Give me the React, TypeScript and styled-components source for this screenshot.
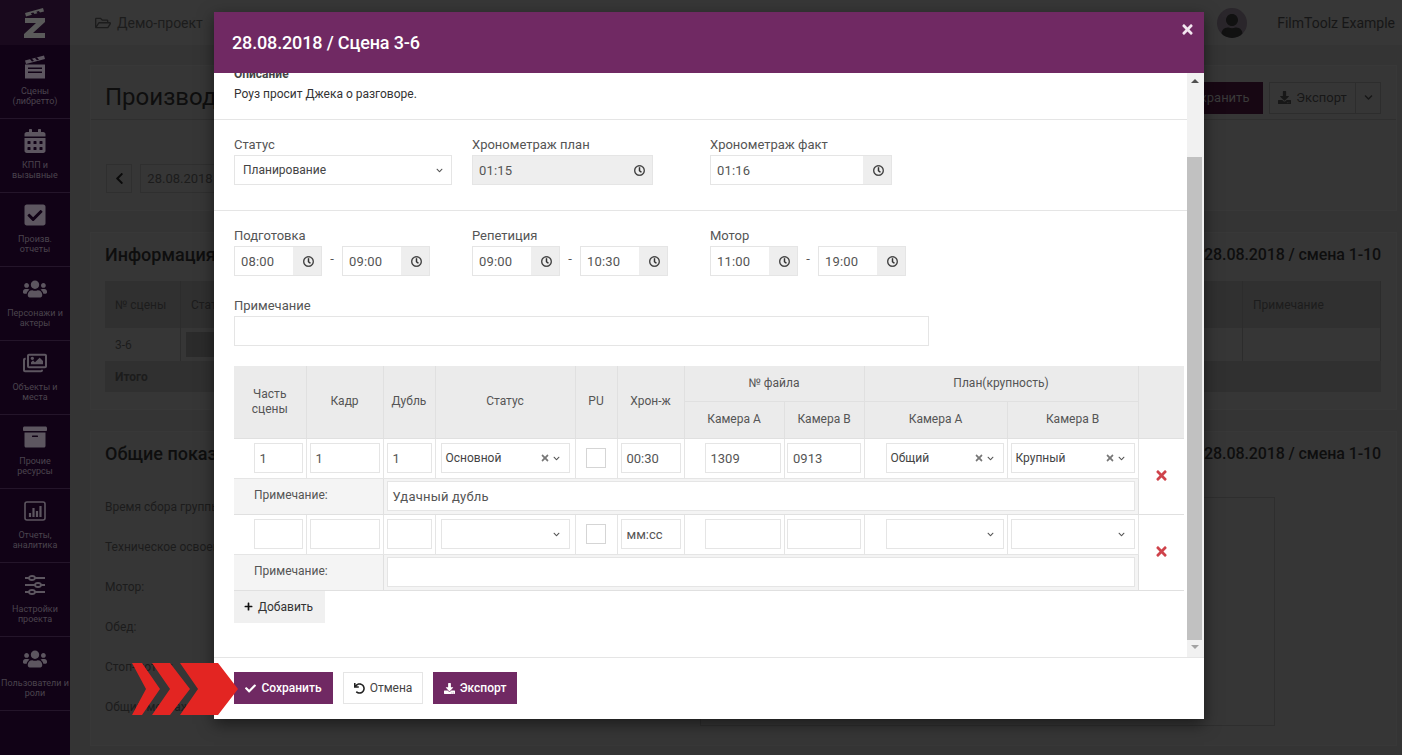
import React from "react";
import styled, { createGlobalStyle } from "styled-components";
import {
  FaArchive,
  FaCalendarAlt,
  FaCheck,
  FaCheckSquare,
  FaChevronDown,
  FaChevronLeft,
  FaDownload,
  FaPlus,
  FaRegClock,
  FaRegFolderOpen,
  FaRegImages,
  FaTimes,
  FaUndo,
  FaUser,
  FaUsers,
} from "react-icons/fa";

const GlobalStyle = createGlobalStyle`
  html, body {
    margin: 0;
    padding: 0;
    background: #343434;
    overflow: hidden;
  }
  * { box-sizing: border-box; }
  body, input, button, table {
    font-family: Roboto, "Liberation Sans", sans-serif;
  }
`;

const Page = styled.div`
  position: relative;
  display: flex;
  width: 1402px;
  height: 755px;
  overflow: hidden;
  background: #343434;
`;

/* ---------- dimmed page behind the modal ---------- */

const Sidebar = styled.nav`
  width: 70px;
  flex: none;
  background: #110216;
`;

const LogoCell = styled.div`
  height: 45px;
  display: flex;
  justify-content: center;
  align-items: center;
  background: #19091d;
`;

const SideItem = styled.div`
  height: 74px;
  border-bottom: 1px solid #24152a;
  display: flex;
  flex-direction: column;
  align-items: center;
  padding-top: 10px;
  color: #5d5660;
  font-size: 24px;
  svg { display: block; height: 24px; }
`;

const SideText = styled.div`
  margin-top: 7px;
  font-size: 9px;
  line-height: 10px;
  text-align: center;
  white-space: pre;
  color: #4b444e;
`;

const Main = styled.main`
  flex: 1;
  min-width: 0;
`;

const TopBar = styled.header`
  height: 45px;
  background: #373737;
  display: flex;
  align-items: center;
  padding: 0 7px 0 25px;
  color: #1c1c1c;
  font-size: 14px;
`;

const ProjectName = styled.div`
  display: flex;
  align-items: center;
  gap: 6px;
  svg { font-size: 16px; }
`;

const Avatar = styled.div`
  margin-left: auto;
  width: 30px;
  height: 30px;
  border-radius: 50%;
  background: #2a262b;
  color: #111;
  display: flex;
  justify-content: center;
  align-items: flex-end;
  overflow: hidden;
  font-size: 24px;
`;

const UserName = styled.div`
  margin-left: 30px;
  color: #161616;
  font-size: 14px;
`;

const Content = styled.div`
  padding: 20px 5px 0 20px;
  display: flex;
  flex-direction: column;
  gap: 21px;
`;

const Card = styled.section<{ $h: number }>`
  height: ${(p) => p.$h}px;
  background: #363636;
  border: 1px solid #383838;
  padding: 0 15px 0 14px;
`;

const PageTitleRow = styled.div`
  height: 54px;
  margin: 0 -15px 0 -14px;
  padding: 10px 15px 0 14px;
  border-bottom: 1px solid #2f2f2f;
  display: flex;
  align-items: center;
  justify-content: flex-end;
`;

const PageTitle = styled.h1`
  margin: 0 auto 2px 0;
  font-size: 24px;
  font-weight: 400;
  color: #0e0e0e;
`;

const DarkButton = styled.div<{ $w: number; $fill?: boolean }>`
  width: ${(p) => p.$w}px;
  height: 32px;
  display: flex;
  align-items: center;
  justify-content: center;
  gap: 5px;
  font-size: 13px;
  color: ${(p) => (p.$fill ? "#3a3a3a" : "#171717")};
  background: ${(p) => (p.$fill ? "#170713" : "transparent")};
  border: 1px solid ${(p) => (p.$fill ? "#170713" : "#2d2d2d")};
  margin-right: ${(p) => (p.$fill ? 6 : 0)}px;
`;

const ChevronButton = styled(DarkButton)`
  border-left: 0;
  font-size: 9px;
`;

const DateRow = styled.div`
  display: flex;
  align-items: center;
  margin-top: 44px;
  gap: 8px;
  margin-left: 1px;
`;

const DateBox = styled.div<{ $w: number }>`
  width: ${(p) => p.$w}px;
  height: 29px;
  border: 1px solid #2f2f2f;
  color: #1c1c1c;
  font-size: 13px;
  display: flex;
  align-items: center;
  justify-content: center;
  svg { color: #0a0a0a; }
`;

const SectionHead = styled.div`
  height: 48px;
  padding-bottom: 5px;
  display: flex;
  align-items: center;
  justify-content: space-between;
`;

const SectionTitle = styled.h2`
  margin: 0;
  font-size: 18px;
  font-weight: 500;
  color: #0e0e0e;
`;

const SectionDate = styled.div`
  font-size: 16px;
  font-weight: 500;
  letter-spacing: -0.1px;
  color: #0e0e0e;
`;

const BgHeadRow = styled.div`
  height: 47px;
  background: #303030;
  display: flex;
  align-items: center;
  font-size: 12px;
  color: #1c1c1c;
`;

const BgRow = styled.div`
  height: 33px;
  display: flex;
  align-items: center;
  font-size: 12px;
  color: #1c1c1c;
`;

const BgTotal = styled(BgRow)`
  height: 31px;
  background: #303030;
  font-weight: 700;
  padding-left: 10px;
`;

const BgCell = styled.div<{ $w: number }>`
  width: ${(p) => p.$w}px;
  height: 100%;
  padding-left: 10px;
  border-right: 1px solid #2c2c2c;
  display: flex;
  align-items: center;
`;

const BgFill = styled(BgCell)`
  flex: 1;
  padding-left: 5px;
`;

const BgBadge = styled.div`
  width: 100px;
  height: 25px;
  background: #2b2b2b;
`;

const BgHeadText = styled.div`
  padding-left: 5px;
`;

const StatsRow = styled.div`
  display: flex;
  justify-content: space-between;
  padding: 19px 106px 0 0;
`;

const StatsList = styled.div`
  display: flex;
  flex-direction: column;
  gap: 24px;
  font-size: 12px;
  line-height: 16px;
  color: #1c1c1c;
`;

const StatsBox = styled.div`
  width: 575px;
  height: 229px;
  margin-top: -2px;
  border: 1px solid #2e2e2e;
`;

/* ---------- modal ---------- */

const Modal = styled.div`
  position: absolute;
  left: 214px;
  top: 12px;
  width: 990px;
  height: 707px;
  display: flex;
  flex-direction: column;
  background: #fff;
  box-shadow: 0 5px 15px rgba(0, 0, 0, 0.5);
`;

const ModalHeader = styled.div`
  height: 61px;
  flex: none;
  padding: 0 18px;
  background: #702963;
  color: #fff;
  display: flex;
  justify-content: space-between;
  align-items: center;
`;

const ModalTitle = styled.h4`
  margin: 0;
  font-size: 18px;
  font-weight: 500;
  letter-spacing: -0.15px;
`;

const CloseIcon = styled(FaTimes)`
  font-size: 15px;
  margin: -26px -9px 0 0;
  color: #f3e6f0;
`;

const ModalMiddle = styled.div`
  flex: 1;
  min-height: 0;
  display: flex;
`;

const ScrollArea = styled.div`
  flex: 1;
  min-width: 0;
  overflow: hidden;
`;

const Scrollbar = styled.div`
  width: 17px;
  flex: none;
  background: #f1f1f1;
  display: flex;
  flex-direction: column;
  align-items: flex-start;
`;

const ScrollArrow = styled.div<{ $up?: boolean }>`
  width: 0;
  height: 0;
  margin: ${(p) => (p.$up ? "6px 0 0 4px" : "5px 0 0 4px")};
  border-left: 4px solid transparent;
  border-right: 4px solid transparent;
  border-bottom: ${(p) => (p.$up ? "4px solid #505050" : "0")};
  border-top: ${(p) => (p.$up ? "0" : "4px solid #a3a3a3")};
`;

const ScrollThumb = styled.div`
  width: 15px;
  height: 483px;
  margin-top: 74px;
  background: #c1c1c1;
`;

const FormBlock = styled.div`
  padding: 0 20px;
  border-bottom: 1px solid #e5e5e5;
`;

const DescBlock = styled(FormBlock)`
  height: 47px;
  padding-top: 14px;
  font-size: 12px;
  line-height: 14px;
  color: #333;
  position: relative;
`;

const DescLabel = styled.div`
  position: absolute;
  top: -6px;
  left: 20px;
  font-weight: 700;
  color: #444;
`;

const FieldRow = styled.div`
  display: flex;
  gap: 20px;
`;

const StatusBlock = styled(FormBlock)`
  height: 91px;
  padding-top: 18px;
`;

const TimesBlock = styled.div`
  padding: 18px 20px 0;
`;

const Field = styled.div`
  width: 218px;
`;

const FieldLabel = styled.div`
  font-size: 13px;
  line-height: 13px;
  height: 17px;
  color: #555;
`;

const InputGroup = styled.div<{ $w: number; $off?: boolean }>`
  width: ${(p) => p.$w}px;
  height: 30px;
  border: 1px solid #e5e5e5;
  background: ${(p) => (p.$off ? "#eeeeee" : "#fff")};
  display: flex;
  align-items: center;
  font-size: 13px;
  color: #555;
`;

const GroupValue = styled.div`
  flex: 1;
  padding-left: 6px;
  letter-spacing: 0.2px;
`;

const ClockAddon = styled.div`
  width: 28px;
  height: 100%;
  background: #eeeeee;
  color: #333;
  display: flex;
  align-items: center;
  justify-content: center;
  font-size: 11px;
  svg { stroke: #333; stroke-width: 12px; margin: 1px 0 0 2px; }
`;

const TimePair = styled.div`
  display: flex;
  align-items: center;
`;

const Dash = styled.div`
  width: 20px;
  text-align: center;
  font-size: 13px;
  color: #555;
  margin-top: -6px;
`;

const SelectBox = styled.div<{ $w: number }>`
  width: ${(p) => p.$w}px;
  height: 30px;
  flex: none;
  border: 1px solid #e5e5e5;
  background: #fff;
  display: flex;
  align-items: center;
  padding: 0 9px 0 4px;
  font-size: 12px;
  color: #444;
`;

const SelectText = styled.div`
  flex: 1;
  margin-bottom: 1px;
`;

const ClearIcon = styled(FaTimes)`
  font-size: 10px;
  color: #777;
  margin-right: 3px;
`;

const Chevron = styled(FaChevronDown)`
  font-size: 7px;
  color: #555;
`;

const StatusSelect = styled(SelectBox)`
  padding: 0 8px;
`;

const NoteField = styled.div`
  margin-top: 23px;
`;

const WideInput = styled.div`
  width: 695px;
  height: 30px;
  border: 1px solid #e5e5e5;
`;

const TableWrap = styled.div`
  padding: 20px 3px 0 20px;
`;

const Shots = styled.table`
  width: 950px;
  table-layout: fixed;
  border-collapse: collapse;
  font-size: 12px;
  color: #555;
`;

const HeadCell = styled.th<{ $h?: number }>`
  height: ${(p) => p.$h ?? 35}px;
  padding: 0 4px;
  background: #ebebeb;
  border: 1px solid #e0e0e0;
  border-top: 0;
  font-weight: 400;
  line-height: 15px;
  text-align: center;
  color: #555;
  &:first-child { border-left: 0; }
  &:last-child { border-right: 0; }
`;

const Cell = styled.td`
  height: 40px;
  padding: 0 3px;
  border: 1px solid #e5e5e5;
  border-top: 0;
  &:first-child { border-left: 0; }
`;

const CellInner = styled.div<{ $end?: boolean }>`
  display: flex;
  justify-content: ${(p) => (p.$end ? "flex-end" : "center")};
`;

const CellInput = styled.div<{ $w: number }>`
  width: ${(p) => p.$w}px;
  height: 30px;
  flex: none;
  border: 1px solid #e5e5e5;
  background: #fff;
  padding-left: 5px;
  display: flex;
  align-items: center;
  font-size: 13px;
  color: #555;
`;

const Check = styled.div`
  width: 20px;
  height: 20px;
  border: 1px solid #d5d5d5;
`;

const NoteLabel = styled.td`
  height: 36px;
  padding: 0 0 3px 20px;
  background: #f4f4f4;
  border-bottom: 1px solid #e0e0e0;
  border-right: 1px solid #e0e0e0;
`;

const NoteCell = styled.td`
  height: 36px;
  padding: 0 3px;
  background: #f4f4f4;
  border-bottom: 1px solid #e0e0e0;
  border-right: 1px solid #e0e0e0;
`;

const NoteInput = styled.div`
  width: 748px;
  height: 30px;
  border: 1px solid #e5e5e5;
  background: #fff;
  padding-left: 5px;
  display: flex;
  align-items: center;
  font-size: 13px;
  color: #555;
  letter-spacing: 0.2px;
`;

const DeleteCell = styled.td`
  border-bottom: 1px solid #e0e0e0;
  padding-bottom: 2px;
  text-align: center;
  vertical-align: middle;
  color: #cf434b;
  font-size: 15px;
  svg { display: block; margin: 0 auto; }
`;

const AddButton = styled.button`
  display: flex;
  align-items: center;
  gap: 5px;
  width: 91px;
  height: 32px;
  padding: 0 0 0 10px;
  border: 0;
  background: #f0f0f0;
  color: #333;
  font-size: 12px;
  svg { font-size: 9px; color: #111; }
`;

const ModalFooter = styled.div`
  height: 62px;
  flex: none;
  border-top: 1px solid #e5e5e5;
  padding: 14px 20px 0;
  display: flex;
  align-items: flex-start;
  gap: 10px;
`;

const FooterButton = styled.button<{ $w: number; $plain?: boolean }>`
  width: ${(p) => p.$w}px;
  height: 32px;
  padding: 0;
  display: flex;
  justify-content: center;
  align-items: center;
  gap: 5px;
  font-size: 12px;
  font-weight: ${(p) => (p.$plain ? 400 : 500)};
  color: ${(p) => (p.$plain ? "#444" : "#fff")};
  background: ${(p) => (p.$plain ? "#fff" : "#702963")};
  border: 1px solid ${(p) => (p.$plain ? "#e5e5e5" : "#702963")};
  svg { font-size: 11px; color: ${(p) => (p.$plain ? "#222" : "#fff")}; }
`;

const PointerArrow = styled.svg`
  position: absolute;
  left: 132px;
  top: 662px;
`;

const ZLogo = () => (
  <svg width="22" height="30" viewBox="0 0 22 30" fill="#5a5a5a">
    <path d="M1 5 19 0l1 3.5-4 1.1-1.2-1.6-2.5.7 1.2 1.6-3 .8L9.300 4.500l-2.500.7 1.200 1.600L2 8.500z" />
    <path d="M1 10h20v4L9 25h12v5H0v-4l12-11H1z" />
  </svg>
);

const Clapper = () => (
  <svg width="22" height="23" viewBox="0 0 22 23" fill="#5d5660">
    <path
      d="M1 5 20 0l1 3.500L2 8.500zM6 3.700 8 6l2-.5L8 3.200zm5-1.300 2 2.300 2-.5-2-2.300z"
      fillRule="evenodd"
    />
    <path d="M1 9h20v14H1zm3 3v1.500h14V12zm0 4v1.500h14V16z" fillRule="evenodd" />
  </svg>
);

const Bars = () => (
  <svg width="24" height="24" viewBox="0 0 24 24" fill="none" stroke="#5d5660">
    <rect x="2" y="3" width="20" height="18" rx="2" strokeWidth="1.6" />
    <path d="M7 18v-4M10.500 18V9M14 18v-6M17.500 18V7" strokeWidth="2.200" />
  </svg>
);

const Sliders = () => (
  <svg width="22" height="24" viewBox="0 0 22 24" fill="#110216" stroke="#5d5660" strokeWidth="1.800">
    <path d="M1 5h20M1 12h20M1 19h20" />
    <ellipse cx="8" cy="5" rx="3" ry="2" />
    <ellipse cx="14" cy="12" rx="3" ry="2" />
    <ellipse cx="8" cy="19" rx="3" ry="2" />
  </svg>
);

const sideItems: [React.ReactNode, string][] = [
  [<Clapper />, "Сцены\n(либретто)"],
  [<FaCalendarAlt />, "КПП и\nвызывные"],
  [<FaCheckSquare />, "Произв.\nотчеты"],
  [<FaUsers />, "Персонажи и\nактеры"],
  [<FaRegImages />, "Объекты и\nместа"],
  [<FaArchive />, "Прочие\nресурсы"],
  [<Bars />, "Отчеты,\nаналитика"],
  [<Sliders />, "Настройки\nпроекта"],
  [<FaUsers />, "Пользователи и\nроли"],
];

const statLabels = [
  "Время сбора группы:",
  "Техническое освоение:",
  "Мотор:",
  "Обед:",
  "Стоп-мотор:",
  "Общий метраж:",
];

const colWidths = [72, 77, 52, 140, 42, 67, 100, 80, 143, 131, 46];

const TimeInput = ({ w, value }: { w: number; value: string }) => (
  <InputGroup $w={w}>
    <GroupValue>{value}</GroupValue>
    <ClockAddon>
      <FaRegClock />
    </ClockAddon>
  </InputGroup>
);

const ShotSelect = ({ w, value }: { w: number; value?: string }) => (
  <SelectBox $w={w}>
    <SelectText>{value}</SelectText>
    {value && <ClearIcon />}
    <Chevron />
  </SelectBox>
);

const ShotRows = ({ shot }: { shot?: boolean }) => (
  <>
    <tr>
      <Cell>
        <CellInner $end>
          <CellInput $w={49}>{shot && "1"}</CellInput>
        </CellInner>
      </Cell>
      <Cell>
        <CellInner>
          <CellInput $w={70}>{shot && "1"}</CellInput>
        </CellInner>
      </Cell>
      <Cell>
        <CellInner>
          <CellInput $w={45}>{shot && "1"}</CellInput>
        </CellInner>
      </Cell>
      <Cell>
        <CellInner>
          <ShotSelect w={129} value={shot ? "Основной" : undefined} />
        </CellInner>
      </Cell>
      <Cell>
        <CellInner>
          <Check />
        </CellInner>
      </Cell>
      <Cell>
        <CellInner>
          <CellInput $w={60}>{shot ? "00:30" : "мм:сс"}</CellInput>
        </CellInner>
      </Cell>
      <Cell>
        <CellInner $end>
          <CellInput $w={76}>{shot && "1309"}</CellInput>
        </CellInner>
      </Cell>
      <Cell>
        <CellInner>
          <CellInput $w={74}>{shot && "0913"}</CellInput>
        </CellInner>
      </Cell>
      <Cell>
        <CellInner $end>
          <ShotSelect w={118} value={shot ? "Общий" : undefined} />
        </CellInner>
      </Cell>
      <Cell>
        <CellInner>
          <ShotSelect w={124} value={shot ? "Крупный" : undefined} />
        </CellInner>
      </Cell>
      <DeleteCell rowSpan={2}>
        <FaTimes />
      </DeleteCell>
    </tr>
    <tr>
      <NoteLabel colSpan={2}>Примечание:</NoteLabel>
      <NoteCell colSpan={8}>
        <NoteInput>{shot && "Удачный дубль"}</NoteInput>
      </NoteCell>
    </tr>
  </>
);

export default function App() {
  return (
    <Page>
      <GlobalStyle />
      <Sidebar>
        <LogoCell>
          <ZLogo />
        </LogoCell>
        {sideItems.map(([icon, label]) => (
          <SideItem key={label}>
            {icon}
            <SideText>{label}</SideText>
          </SideItem>
        ))}
      </Sidebar>

      <Main>
        <TopBar>
          <ProjectName>
            <FaRegFolderOpen />
            Демо-проект
          </ProjectName>
          <Avatar>
            <FaUser />
          </Avatar>
          <UserName>FilmToolz Example</UserName>
        </TopBar>
        <Content>
          <Card $h={146}>
            <PageTitleRow>
              <PageTitle>Производственный отчет</PageTitle>
              <DarkButton $w={92} $fill>
                Сохранить
              </DarkButton>
              <DarkButton $w={87}>
                <FaDownload />
                Экспорт
              </DarkButton>
              <ChevronButton $w={25}>
                <FaChevronDown />
              </ChevronButton>
            </PageTitleRow>
            <DateRow>
              <DateBox $w={26}>
                <FaChevronLeft />
              </DateBox>
              <DateBox $w={80}>28.08.2018</DateBox>
            </DateRow>
          </Card>
          <Card $h={178}>
            <SectionHead>
              <SectionTitle>Информация</SectionTitle>
              <SectionDate>28.08.2018 / смена 1-10</SectionDate>
            </SectionHead>
            <BgHeadRow>
              <BgCell $w={76}>№ сцены</BgCell>
              <BgFill $w={0}>
                <BgHeadText>Статус</BgHeadText>
              </BgFill>
              <BgCell $w={138}>Примечание</BgCell>
            </BgHeadRow>
            <BgRow>
              <BgCell $w={76}>3-6</BgCell>
              <BgFill $w={0}>
                <BgBadge />
              </BgFill>
              <BgCell $w={138} />
            </BgRow>
            <BgTotal>Итого</BgTotal>
          </Card>
          <Card $h={315}>
            <SectionHead>
              <SectionTitle>Общие показатели</SectionTitle>
              <SectionDate>28.08.2018 / смена 1-10</SectionDate>
            </SectionHead>
            <StatsRow>
              <StatsList>
                {statLabels.map((s) => (
                  <div key={s}>{s}</div>
                ))}
              </StatsList>
              <StatsBox />
            </StatsRow>
          </Card>
        </Content>
      </Main>

      <Modal>
        <ModalHeader>
          <ModalTitle>28.08.2018 / Сцена 3-6</ModalTitle>
          <CloseIcon />
        </ModalHeader>
        <ModalMiddle>
          <ScrollArea>
            <DescBlock>
              <DescLabel>Описание</DescLabel>
              Роуз просит Джека о разговоре.
            </DescBlock>
            <StatusBlock>
              <FieldRow>
                <Field>
                  <FieldLabel>Статус</FieldLabel>
                  <StatusSelect $w={218}>
                    <SelectText>Планирование</SelectText>
                    <Chevron />
                  </StatusSelect>
                </Field>
                <Field>
                  <FieldLabel>Хронометраж план</FieldLabel>
                  <InputGroup $w={181} $off>
                    <GroupValue>01:15</GroupValue>
                    <ClockAddon>
                      <FaRegClock />
                    </ClockAddon>
                  </InputGroup>
                </Field>
                <Field>
                  <FieldLabel>Хронометраж факт</FieldLabel>
                  <TimeInput w={182} value="01:16" />
                </Field>
              </FieldRow>
            </StatusBlock>
            <TimesBlock>
              <FieldRow>
                <Field>
                  <FieldLabel>Подготовка</FieldLabel>
                  <TimePair>
                    <TimeInput w={88} value="08:00" />
                    <Dash>-</Dash>
                    <TimeInput w={88} value="09:00" />
                  </TimePair>
                </Field>
                <Field>
                  <FieldLabel>Репетиция</FieldLabel>
                  <TimePair>
                    <TimeInput w={88} value="09:00" />
                    <Dash>-</Dash>
                    <TimeInput w={88} value="10:30" />
                  </TimePair>
                </Field>
                <Field>
                  <FieldLabel>Мотор</FieldLabel>
                  <TimePair>
                    <TimeInput w={88} value="11:00" />
                    <Dash>-</Dash>
                    <TimeInput w={88} value="19:00" />
                  </TimePair>
                </Field>
              </FieldRow>
              <NoteField>
                <FieldLabel>Примечание</FieldLabel>
                <WideInput />
              </NoteField>
            </TimesBlock>
            <TableWrap>
              <Shots>
                <colgroup>
                  {colWidths.map((w, i) => (
                    <col key={i} width={w} />
                  ))}
                </colgroup>
                <thead>
                  <tr>
                    <HeadCell rowSpan={2}>
                      Часть
                      <br />
                      сцены
                    </HeadCell>
                    <HeadCell rowSpan={2}>Кадр</HeadCell>
                    <HeadCell rowSpan={2}>Дубль</HeadCell>
                    <HeadCell rowSpan={2}>Статус</HeadCell>
                    <HeadCell rowSpan={2}>PU</HeadCell>
                    <HeadCell rowSpan={2}>Хрон-ж</HeadCell>
                    <HeadCell colSpan={2}>№ файла</HeadCell>
                    <HeadCell colSpan={2}>План(крупность)</HeadCell>
                    <HeadCell rowSpan={2} />
                  </tr>
                  <tr>
                    <HeadCell $h={37}>Камера А</HeadCell>
                    <HeadCell $h={37}>Камера В</HeadCell>
                    <HeadCell $h={37}>Камера А</HeadCell>
                    <HeadCell $h={37}>Камера В</HeadCell>
                  </tr>
                </thead>
                <tbody>
                  <ShotRows shot />
                  <ShotRows />
                </tbody>
              </Shots>
              <AddButton>
                <FaPlus />
                Добавить
              </AddButton>
            </TableWrap>
          </ScrollArea>
          <Scrollbar>
            <ScrollArrow $up />
            <ScrollThumb />
            <ScrollArrow />
          </Scrollbar>
        </ModalMiddle>
        <ModalFooter>
          <FooterButton $w={99}>
            <FaCheck />
            Сохранить
          </FooterButton>
          <FooterButton $w={80} $plain>
            <FaUndo />
            Отмена
          </FooterButton>
          <FooterButton $w={84}>
            <FaDownload />
            Экспорт
          </FooterButton>
        </ModalFooter>
      </Modal>

      <PointerArrow width="106" height="54" viewBox="0 0 106 54" fill="#e32522">
        <path d="M0 1h10l18 26-18 26H0l14-26z" />
        <path d="M20 1h18l20 26-20 26H20l18-26z" />
        <path d="M48 1h38l20 26-20 26H48l18-26z" />
      </PointerArrow>
    </Page>
  );
}
